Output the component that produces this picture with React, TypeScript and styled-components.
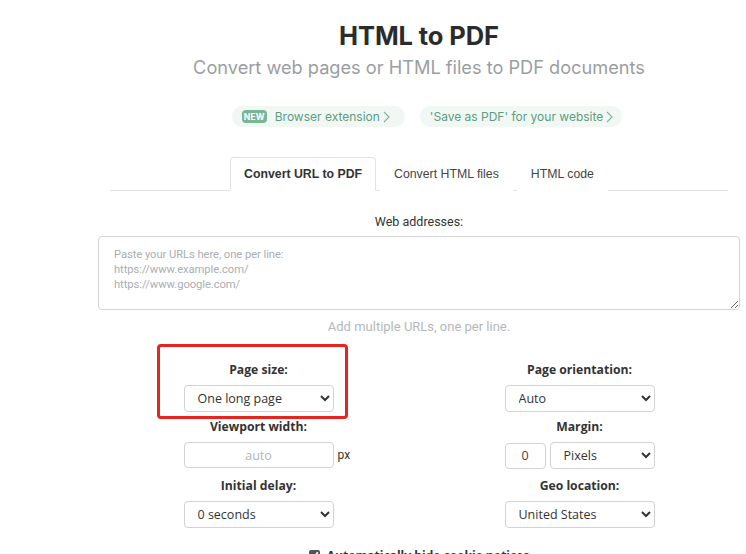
import React from "react";
import styled, { createGlobalStyle } from "styled-components";

const Global = createGlobalStyle`
  html, body { margin: 0; padding: 0; background: #fff; overflow: hidden; }
  body { font-family: "Open Sans", "Liberation Sans", sans-serif; color: #333; }
  * { box-sizing: border-box; }
`;

const Page = styled.div`
  width: 642px;
  margin-left: 98px;
  padding-top: 20px;
  display: flex;
  flex-direction: column;
  align-items: stretch;
`;

const Title = styled.h1`
  margin: 0;
  font-family: "Inter", "Liberation Sans", sans-serif;
  font-weight: 700;
  font-size: 25.5px;
  line-height: 32px;
  color: #2b2b2b;
  text-align: center;
  letter-spacing: -0.1px;
`;

const Subtitle = styled.p`
  margin: 3px 0 0;
  font-family: "Inter", "Liberation Sans", sans-serif;
  font-size: 18.2px;
  line-height: 24px;
  color: #9a9ea3;
  text-align: center;
`;

const PillRow = styled.div`
  margin-top: 27px;
  padding-left: 16px;
  display: flex;
  justify-content: center;
  gap: 15px;
`;

const Pill = styled.a<{ $extraRight?: boolean }>`
  display: inline-flex;
  align-items: center;
  gap: 8px;
  height: 21px;
  padding: 0 ${(p) => (p.$extraRight ? 15 : 9)}px 0 10px;
  border-radius: 10px;
  background: #f1f8f4;
  color: #5d9c80;
  font-family: "Inter", "Liberation Sans", sans-serif;
  font-size: 12px;
  text-decoration: none;
`;

const Badge = styled.span`
  display: inline-flex;
  align-items: center;
  justify-content: center;
  height: 13px;
  width: 25px;
  border-radius: 4px;
  background: #78b597;
  color: #fff;
  font-size: 8.5px;
  font-weight: 700;
  letter-spacing: 0.1px;
`;

const PillText = styled.span`
  display: inline-flex;
  align-items: center;
  gap: 3px;
`;

const Chevron = () => (
  <svg width="7" height="12" viewBox="0 0 7 12" fill="none">
    <polyline points="1,1 6,6 1,11" stroke="#7fb39a" strokeWidth="1.1" />
  </svg>
);

const Tabs = styled.div`
  margin: 30px 12px 0;
  display: flex;
  justify-content: center;
  border-bottom: 1px solid #e3e3e3;
`;

const Tab = styled.div<{ $active?: boolean }>`
  height: 34px;
  padding: 0 13px;
  margin-bottom: -1px;
  display: flex;
  align-items: center;
  font-family: "Liberation Sans", Arial, sans-serif;
  font-size: 12.3px;
  font-weight: ${(p) => (p.$active ? 700 : 400)};
  color: ${(p) => (p.$active ? "#333" : "#444")};
  border: 1px solid ${(p) => (p.$active ? "#e3e3e3" : "transparent")};
  border-bottom-color: ${(p) => (p.$active ? "#fff" : "transparent")};
  border-radius: 4px 4px 0 0;
  background: #fff;
  & + & { margin-left: 4px; }
`;

const FieldLabel = styled.div`
  margin-top: 23px;
  font-family: "Roboto", "Liberation Sans", sans-serif;
  font-size: 12.5px;
  line-height: 16px;
  color: #333;
  text-align: center;
`;

const UrlBox = styled.textarea`
  margin-top: 6px;
  height: 74px;
  width: 100%;
  padding: 10px 15px;
  border: 1px solid #d4d4d4;
  border-radius: 4px;
  font-family: "Roboto", "Liberation Sans", sans-serif;
  font-size: 11.2px;
  letter-spacing: -0.05px;
  line-height: 15px;
  color: #333;
  resize: vertical;
  outline: none;
  &::placeholder { color: #a9aeb3; }
`;

const Hint = styled.div`
  margin-top: 9px;
  font-family: "Roboto", "Liberation Sans", sans-serif;
  font-size: 13px;
  line-height: 16px;
  color: #b5b8bb;
  text-align: center;
`;

const Options = styled.div`
  position: relative;
  margin-top: 27px;
  display: grid;
  grid-template-columns: 1fr 1fr;
  row-gap: 7px;
`;

const Field = styled.div<{ $shift?: number }>`
  display: flex;
  flex-direction: column;
  align-items: center;
  gap: 7px;
  margin-top: ${(p) => p.$shift ?? 0}px;
`;

const OptLabel = styled.div`
  font-family: "Open Sans", sans-serif;
  font-weight: 700;
  font-size: 12.2px;
  line-height: 16px;
  color: #333;
`;

const Controls = styled.div`
  display: flex;
  align-items: center;
  gap: 4px;
  width: 150px;
  position: relative;
`;

const Select = styled.select<{ $w?: number }>`
  width: ${(p) => (p.$w ? `${p.$w}px` : "150px")};
  height: 27px;
  padding: 0 6px 0 9px;
  border: 1px solid #d2d2d2;
  border-radius: 4px;
  background: #fff;
  font-family: "Open Sans", sans-serif;
  font-size: 12.5px;
  color: #333;
  outline: none;
`;

const TextInput = styled.input<{ $w?: number }>`
  width: ${(p) => (p.$w ? `${p.$w}px` : "150px")};
  height: 26px;
  padding: 0 4px;
  border: 1px solid #d2d2d2;
  border-radius: 4px;
  background: #fff;
  font-family: "Open Sans", sans-serif;
  font-size: 12.5px;
  color: #444;
  text-align: center;
  outline: none;
  &::placeholder { color: #b0b4b8; }
`;

const Unit = styled.span`
  position: absolute;
  left: 154px;
  font-family: "Roboto", "Liberation Sans", sans-serif;
  font-size: 12px;
  color: #333;
`;

const Highlight = styled.div`
  position: absolute;
  left: 59px;
  top: -18px;
  width: 191px;
  height: 75px;
  border: 3px solid #e8241e;
  border-radius: 4px;
  pointer-events: none;
`;

const CheckRow = styled.label`
  margin-top: 19px;
  display: flex;
  justify-content: center;
  align-items: center;
  gap: 7px;
  font-family: "Open Sans", sans-serif;
  font-weight: 700;
  font-size: 12px;
  color: #333;
  input { margin: 0; width: 11px; height: 11px; accent-color: #555; }
`;

export default function App() {
  return (
    <>
      <Global />
      <Page>
        <Title>HTML to PDF</Title>
        <Subtitle>Convert web pages or HTML files to PDF documents</Subtitle>
        <PillRow>
          <Pill href="#" $extraRight>
            <Badge>NEW</Badge>
            <PillText>
              Browser extension <Chevron />
            </PillText>
          </Pill>
          <Pill href="#">
            <PillText>
              'Save as PDF' for your website <Chevron />
            </PillText>
          </Pill>
        </PillRow>
        <Tabs>
          <Tab $active>Convert URL to PDF</Tab>
          <Tab>Convert HTML files</Tab>
          <Tab>HTML code</Tab>
        </Tabs>
        <FieldLabel>Web addresses:</FieldLabel>
        <UrlBox
          placeholder={
            "Paste your URLs here, one per line:\nhttps://www.example.com/\nhttps://www.google.com/"
          }
        />
        <Hint>Add multiple URLs, one per line.</Hint>
        <Options>
          <Field>
            <OptLabel>Page size:</OptLabel>
            <Controls>
              <Select defaultValue="long">
                <option value="long">One long page</option>
                <option value="a4">A4</option>
              </Select>
            </Controls>
          </Field>
          <Field>
            <OptLabel>Page orientation:</OptLabel>
            <Controls>
              <Select defaultValue="auto">
                <option value="auto">Auto</option>
                <option value="portrait">Portrait</option>
              </Select>
            </Controls>
          </Field>
          <Field>
            <OptLabel>Viewport width:</OptLabel>
            <Controls>
              <TextInput placeholder="auto" />
              <Unit>px</Unit>
            </Controls>
          </Field>
          <Field>
            <OptLabel>Margin:</OptLabel>
            <Controls>
              <TextInput $w={41} defaultValue="0" />
              <Select $w={105} defaultValue="px">
                <option value="px">Pixels</option>
                <option value="mm">Millimeters</option>
              </Select>
            </Controls>
          </Field>
          <Field $shift={2}>
            <OptLabel>Initial delay:</OptLabel>
            <Controls>
              <Select defaultValue="0">
                <option value="0">0 seconds</option>
                <option value="1">1 second</option>
              </Select>
            </Controls>
          </Field>
          <Field $shift={2}>
            <OptLabel>Geo location:</OptLabel>
            <Controls>
              <Select defaultValue="us">
                <option value="us">United States</option>
                <option value="de">Germany</option>
              </Select>
            </Controls>
          </Field>
          <Highlight />
        </Options>
        <CheckRow>
          <input type="checkbox" defaultChecked />
          Automatically hide cookie notices
        </CheckRow>
      </Page>
    </>
  );
}
